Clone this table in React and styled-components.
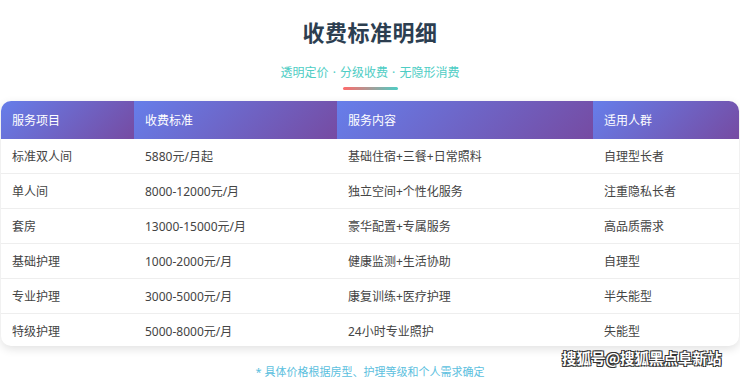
import React from "react";
import styled, { createGlobalStyle } from "styled-components";

const Global = createGlobalStyle`
  html, body { margin: 0; padding: 0; background: #fff; }
  body { font-family: "Noto Sans", "Noto Sans CJK SC", sans-serif; }
`;

const Page = styled.div`
  position: relative;
  width: 740px;
  height: 379px;
  overflow: hidden;
  display: flex;
  flex-direction: column;
  align-items: center;
`;

const Title = styled.h2`
  margin: 18px 0 0;
  font-size: 22px;
  line-height: 28px;
  font-weight: 700;
  color: #2c3e50;
  letter-spacing: 0.5px;
`;

const Subtitle = styled.p`
  margin: 19px 0 0;
  font-size: 12px;
  line-height: 16px;
  color: #4ecdc4;
  word-spacing: 1px;
`;

const Bar = styled.div`
  width: 55px;
  height: 3px;
  margin-top: 6px;
  border-radius: 2px;
  background: linear-gradient(90deg, #ff6b6b, #4ecdc4);
`;

const Card = styled.div`
  margin-top: 11px;
  width: 738px;
  border-radius: 10px;
  overflow: hidden;
  background: #fff;
  box-shadow: 0 3px 10px rgba(0, 0, 0, 0.12);
`;

const Table = styled.table`
  width: 100%;
  border-collapse: collapse;
  table-layout: fixed;
  font-size: 12px;
`;

const Th = styled.th`
  height: 38px;
  padding: 0 11px;
  text-align: left;
  font-weight: 400;
  color: #fff;
  background: linear-gradient(135deg, #667eea 0%, #764ba2 100%);
`;

const Td = styled.td`
  height: 34px;
  padding: 0 11px;
  color: #444;
  border-top: ${(p) => (p.$first ? "none" : "1px solid #eee")};
`;

const Note = styled.p`
  margin: 19px 0 0;
  font-size: 11px;
  line-height: 14px;
  color: #5bc0de;
`;

const Watermark = styled.div`
  position: absolute;
  left: 562px;
  top: 348px;
  white-space: nowrap;
  font-family: "Noto Sans CJK SC", sans-serif;
  font-size: 14.5px;
  line-height: 20px;
  font-weight: 700;
  color: #fff;
  text-shadow: -1px -1px 0 #333, 1px -1px 0 #333, -1px 1px 0 #333, 1px 1px 0 #333;
`;

const headers = ["服务项目", "收费标准", "服务内容", "适用人群"];
const widths = [133, 203, 256, 146];
const rows = [
  ["标准双人间", "5880元/月起", "基础住宿+三餐+日常照料", "自理型长者"],
  ["单人间", "8000-12000元/月", "独立空间+个性化服务", "注重隐私长者"],
  ["套房", "13000-15000元/月", "豪华配置+专属服务", "高品质需求"],
  ["基础护理", "1000-2000元/月", "健康监测+生活协助", "自理型"],
  ["专业护理", "3000-5000元/月", "康复训练+医疗护理", "半失能型"],
  ["特级护理", "5000-8000元/月", "24小时专业照护", "失能型"],
];

export default function App() {
  return (
    <Page>
      <Global />
      <Title>收费标准明细</Title>
      <Subtitle>透明定价 · 分级收费 · 无隐形消费</Subtitle>
      <Bar />
      <Card>
        <Table>
          <colgroup>
            {widths.map((w, i) => (
              <col key={i} style={{ width: w }} />
            ))}
          </colgroup>
          <thead>
            <tr>
              {headers.map((h) => (
                <Th key={h}>{h}</Th>
              ))}
            </tr>
          </thead>
          <tbody>
            {rows.map((r, i) => (
              <tr key={i}>
                {r.map((c, j) => (
                  <Td key={j} $first={i === 0}>
                    {c}
                  </Td>
                ))}
              </tr>
            ))}
          </tbody>
        </Table>
      </Card>
      <Note>* 具体价格根据房型、护理等级和个人需求确定</Note>
      <Watermark>搜狐号@搜狐黑点阜新站</Watermark>
    </Page>
  );
}
